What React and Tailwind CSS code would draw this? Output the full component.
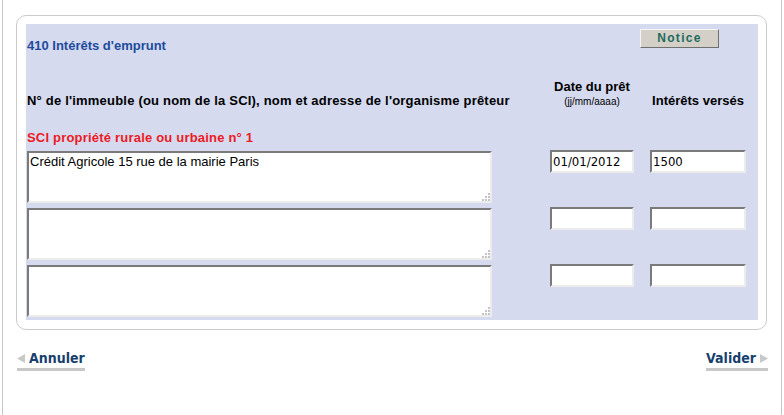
import React from 'react';

const arial = { fontFamily: '"Liberation Sans", Arial, sans-serif' };
const tahoma = { fontFamily: '"DejaVu Sans Condensed", "DejaVu Sans", sans-serif' };

const Grip = () => (
  <svg className="absolute right-[2px] bottom-[2px]" width="9" height="9" viewBox="0 0 9 9">
    <rect x="7" y="1" width="2" height="2" fill="#c4c4c4" />
    <rect x="4" y="4" width="2" height="2" fill="#c4c4c4" />
    <rect x="7" y="4" width="2" height="2" fill="#c4c4c4" />
    <rect x="1" y="7" width="2" height="2" fill="#c4c4c4" />
    <rect x="4" y="7" width="2" height="2" fill="#c4c4c4" />
    <rect x="7" y="7" width="2" height="2" fill="#c4c4c4" />
  </svg>
);

const LoanRow = ({ lender, date, amount }) => (
  <div className="flex items-start">
    <div className="relative w-[465px] h-[52px]">
      <textarea
        defaultValue={lender}
        style={arial}
        className="w-full h-full resize-none bg-white text-[13px] leading-[15px] text-black px-[1px] pt-[1px] border-2 border-t-[#7a7a7a] border-l-[#7a7a7a] border-b-[#ececec] border-r-[#ececec] outline-none overflow-hidden"
      />
      <Grip />
    </div>
    <input
      defaultValue={date}
      style={tahoma}
      className="ml-[58px] -mt-[1px] w-[84px] h-[23px] bg-white text-[13px] text-black px-[1px] border-2 border-t-[#7a7a7a] border-l-[#7a7a7a] border-b-[#ececec] border-r-[#ececec] outline-none"
    />
    <input
      defaultValue={amount}
      style={tahoma}
      className="ml-[16px] -mt-[1px] w-[96px] h-[23px] bg-white text-[13px] text-black px-[1px] border-2 border-t-[#7a7a7a] border-l-[#7a7a7a] border-b-[#ececec] border-r-[#ececec] outline-none"
    />
  </div>
);

const App = () => {
  return (
    <div className="w-[784px] h-[415px] bg-white">
      <div className="ml-[2px] w-[780px] h-[415px] border-x border-[#c6c6c6] pt-[15px]">
        <div className="ml-[13px] w-[751px] rounded-[10px] border border-[#cbcbcb] pt-[8px] pl-[9px] pr-[8px] pb-[9px]">
          <div className="bg-[#d5daef] h-[296px] pl-[1px]" style={arial}>
            <div className="flex h-[30px]">
              <div className="mt-[14px] text-[13px] leading-[15px] font-bold text-[#1d4c9c]">410 Intérêts d'emprunt</div>
              <button
                style={arial}
                className="ml-auto mr-[39px] mt-[5px] w-[79px] h-[19px] bg-[#d4d0c8] border border-t-[#f4f4f4] border-l-[#f4f4f4] border-b-[#6f6f6f] border-r-[#6f6f6f] text-[12px] font-bold tracking-[1.3px] text-[#1d6b5e] leading-[15px]"
              >
                Notice
              </button>
            </div>
            <div className="flex items-end pt-[24px] h-[54px]">
              <div className="w-[465px] text-[13px] leading-[15px] font-bold tracking-[0.2px] text-black whitespace-nowrap">
                N° de l'immeuble (ou nom de la SCI), nom et adresse de l'organisme prêteur
              </div>
              <div className="ml-[58px] w-[84px] flex flex-col items-center">
                <div className="text-[13px] leading-[15px] font-bold text-black whitespace-nowrap">Date du prêt</div>
                <div className="mt-[2px] text-[10px] leading-[12px] text-black whitespace-nowrap">(jj/mm/aaaa)</div>
              </div>
              <div className="ml-[16px] w-[96px] text-center text-[13px] leading-[15px] font-bold text-black whitespace-nowrap">
                Intérêts versés
              </div>
            </div>
            <div className="mt-[22px] text-[13px] leading-[15px] font-bold tracking-[0.2px] text-[#ec1b24]">
              SCI propriété rurale ou urbaine n° 1
            </div>
            <div className="mt-[6px] flex flex-col gap-[5px]">
              <LoanRow lender="Crédit Agricole 15 rue de la mairie Paris" date="01/01/2012" amount="1500" />
              <LoanRow lender="" date="" amount="" />
              <LoanRow lender="" date="" amount="" />
            </div>
          </div>
        </div>
        <div className="flex justify-between mt-[19px] pl-[14px] pr-[13px]" style={tahoma}>
          <a href="#" className="flex items-center h-[22px] border-b-[3px] border-[#c8c8c8] text-[14px] font-bold text-[#173f6e] no-underline">
            <svg width="8" height="9" viewBox="0 0 8 9" className="mr-[4px]">
              <polygon points="8,0 8,9 0,4.5" fill="#c8c8c8" />
            </svg>
            Annuler
          </a>
          <a href="#" className="flex items-center h-[22px] border-b-[3px] border-[#c8c8c8] text-[14px] font-bold text-[#173f6e] no-underline">
            Valider
            <svg width="8" height="9" viewBox="0 0 8 9" className="ml-[4px]">
              <polygon points="0,0 0,9 8,4.5" fill="#c8c8c8" />
            </svg>
          </a>
        </div>
      </div>
    </div>
  );
};

export default App;
